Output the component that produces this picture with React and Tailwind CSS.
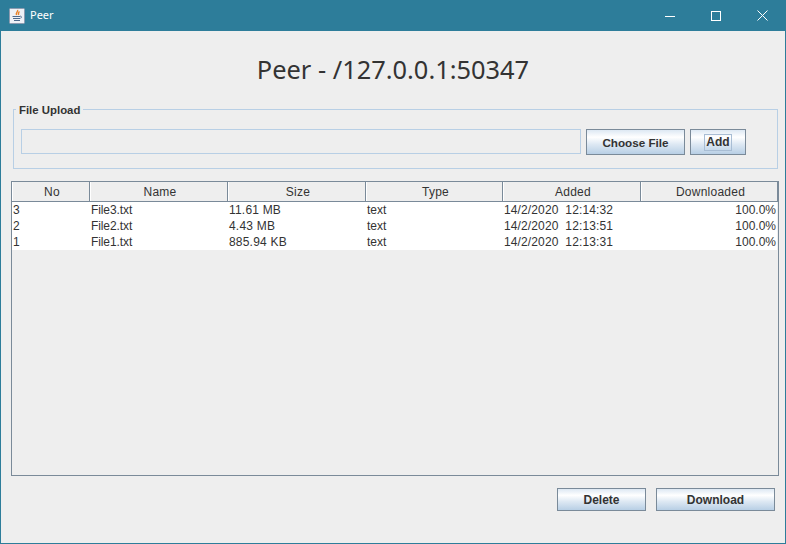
import React from 'react';

const COLUMNS = [
	{ name: 'No', width: 'w-[78px]' },
	{ name: 'Name', width: 'w-[138px]' },
	{ name: 'Size', width: 'w-[138px]' },
	{ name: 'Type', width: 'w-[137px]' },
	{ name: 'Added', width: 'w-[138px]' },
	{ name: 'Downloaded', width: 'w-[138px]' },
];

const ROWS = [
	['3', 'File3.txt', '11.61 MB', 'text', '14/2/2020  12:14:32', '100.0%'],
	['2', 'File2.txt', '4.43 MB', 'text', '14/2/2020  12:13:51', '100.0%'],
	['1', 'File1.txt', '885.94 KB', 'text', '14/2/2020  12:13:31', '100.0%'],
];

// per column text tweaks, the reference is hinted a bit differently
const CELL_STYLE = ['', 'tracking-[-0.1px]', 'tracking-[0.2px]', '', 'tracking-[0.12px]', 'text-right pr-[3px]'];

function JavaIcon() {
	return (
		<svg width="16" height="16" viewBox="0 0 16 16">
			<rect x="0.5" y="0.5" width="15" height="15" rx="1" fill="#eef1f6" stroke="#8c9bb0" />
			<path d="M8.500 2c1 1.500-2.200 2.700-.8 5M10.500 3.500c-1 .8-1.500 1.800-.7 3.300" fill="none" stroke="#e8832a" strokeWidth="1.400" />
			<path d="M3.500 8.500h7.500M4 10.500h7M5 12.500h6" stroke="#4d6a8c" strokeWidth="1" />
			<path d="M11 8c2 0 2 2 .3 2.300" fill="none" stroke="#4d6a8c" strokeWidth="0.800" />
		</svg>
	);
}

function SwingButton({ width, height, children }) {
	return (
		<button className={`${width} ${height} shrink-0 flex items-center justify-center border border-[#7a8a99] bg-[linear-gradient(to_bottom,#dde8f3_0%,#ffffff_30%,#dde8f3_60%,#b8cfe5_100%)] text-[12px] font-bold text-[#333333]`}>
			{children}
		</button>
	);
}

export default function App() {
	return (
		<div className="w-[786px] h-[544px] flex flex-col border border-t-0 border-[#2d7d9a] bg-[#eeeeee] font-['Liberation_Sans',sans-serif] overflow-hidden">
			{/* Title bar */}
			<div className="h-[31px] shrink-0 -mx-px flex items-center bg-[#2d7d9a] text-white">
				<div className="ml-[9px] mr-[5px] flex">
					<JavaIcon />
				</div>
				<span className="text-[11px] font-['Noto_Sans',sans-serif]">Peer</span>
				<div className="ml-auto mr-px flex items-center">
					<div className="w-[46px] flex justify-center">
						<svg width="10" height="10" viewBox="0 0 10 10">
							<path d="M0 5.500h10" stroke="white" strokeWidth="1" />
						</svg>
					</div>
					<div className="w-[46px] flex justify-center">
						<svg width="10" height="10" viewBox="0 0 10 10">
							<rect x="0.500" y="0.500" width="9" height="9" fill="none" stroke="white" strokeWidth="1" />
						</svg>
					</div>
					<div className="w-[46px] flex justify-center">
						<svg width="11" height="11" viewBox="0 0 11 11">
							<path d="M.5.500l10 10M10.500.500l-10 10" stroke="white" strokeWidth="1" />
						</svg>
					</div>
				</div>
			</div>

			<h1 className="mt-[21px] h-[36px] flex items-center justify-center text-[25.4px] leading-none text-[#333333] font-['Noto_Sans',sans-serif]">
				Peer - /127.0.0.1:50347
			</h1>

			{/* File upload group */}
			<div className="relative mt-[21px] ml-[12px] w-[765px] h-[60px] shrink-0 border border-[#b8cfe5]">
				<span className="absolute left-[2px] top-[-7px] px-[3px] bg-[#eeeeee] text-[11.400px] leading-[14px] font-bold text-[#333333]">
					File Upload
				</span>
				<div className="mt-[19px] ml-[7px] flex gap-[5px]">
					<div className="w-[560px] h-[25px] border border-[#b8cfe5] bg-[#eeeeee]" />
					<SwingButton width="w-[99px]" height="h-[26px]">
						<span className="text-[11.700px] pt-px">Choose File</span>
					</SwingButton>
					<SwingButton width="w-[56px]" height="h-[26px]">
						<span className="border border-[#a8bdd4] px-px h-[17px] flex items-center">Add</span>
					</SwingButton>
				</div>
			</div>

			{/* Table */}
			<div className="mt-[12px] ml-[10px] w-[768px] h-[295px] shrink-0 border border-[#7a8a99] text-[12px] text-[#333333]">
				<div className="flex h-[20px] border-b border-[#7a8a99]">
					{COLUMNS.map((col) => (
						<div
							key={col.name}
							className={`${col.width} shrink-0 border-r border-[#7a8a99] border-l border-l-white flex items-center justify-center pl-[2px] pt-px tracking-[0.25px] last:border-r-2`}>
							{col.name}
						</div>
					))}
				</div>
				<div className="bg-white mr-px">
					{ROWS.map((row) => (
						<div key={row[0]} className="flex h-[16px] items-center">
							{row.map((cell, i) => (
								<div
									key={i}
									className={`${COLUMNS[i].width} shrink-0 pl-px whitespace-pre ${CELL_STYLE[i]}`}>
									{cell}
								</div>
							))}
						</div>
					))}
				</div>
			</div>

			{/* Bottom actions */}
			<div className="mt-[12px] mr-[10px] flex justify-end gap-[10px]">
				<SwingButton width="w-[89px]" height="h-[23px]">Delete</SwingButton>
				<SwingButton width="w-[119px]" height="h-[23px]">Download</SwingButton>
			</div>
		</div>
	);
}
